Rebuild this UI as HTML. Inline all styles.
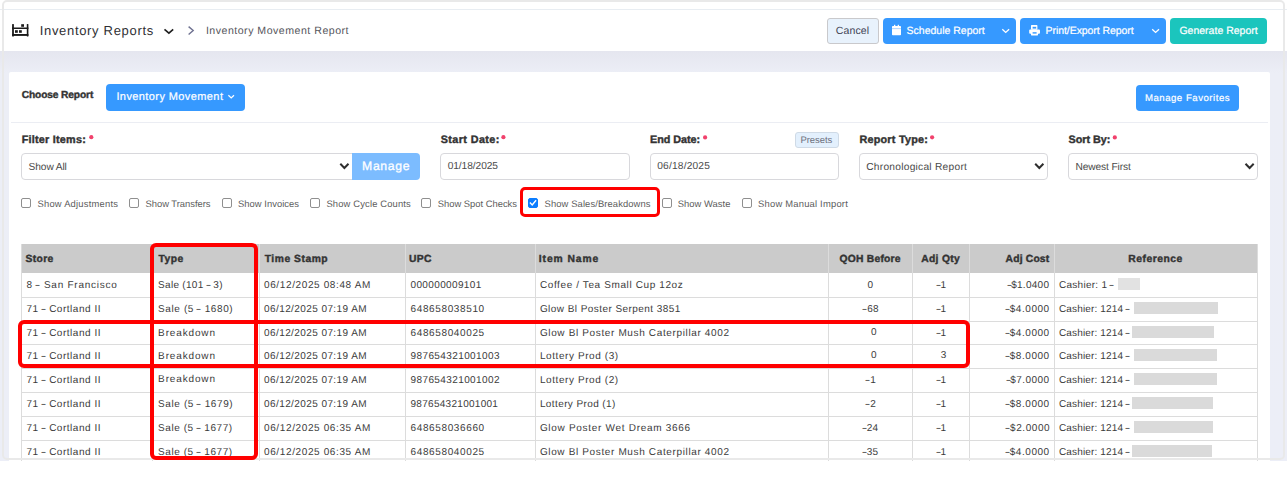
<!DOCTYPE html>
<html><head><meta charset="utf-8">
<style>
html,body{margin:0;padding:0}
body{width:1287px;height:481px;position:relative;overflow:hidden;background:#fff;font-family:"Liberation Sans",sans-serif}
.a{position:absolute;box-sizing:border-box}
.t{position:absolute;white-space:pre;line-height:1;font-family:"Liberation Sans",sans-serif;text-rendering:geometricPrecision}
.btn{position:absolute;box-sizing:border-box;background:#3699ff;border-radius:4px}
.inp{position:absolute;box-sizing:border-box;background:#fff;border:1px solid #d8d8dc;border-radius:4px}
.cb{position:absolute;box-sizing:border-box;width:10px;height:10px;border:1px solid #8f8f8f;border-radius:2px;background:#fff}
.hl{position:absolute;left:21.5px;width:1236px;height:1px;background:#dcdcdc}
.vl{position:absolute;top:244px;width:1px;height:217px;background:#dcdcdc}
.d{display:inline-block;transform:scaleX(1.65)}
.red{position:absolute;box-sizing:border-box;border:4px solid #ff0000;border-radius:6px}
</style></head><body>
<!-- lavender page bg -->
<div class="a" style="left:0;top:51px;width:1287px;height:410px;background:linear-gradient(#e5e6ef 0px,#eceef6 22px,#eceef7 100%)"></div>
<!-- header line -->
<div class="a" style="left:0;top:9px;width:1287px;height:1px;background:#e8edf2"></div>
<!-- card -->
<div class="a" style="left:9px;top:72px;width:1261px;height:389px;background:#fff;border-radius:2px 2px 0 0"></div>

<!-- header icon -->
<svg class="a" style="left:0;top:0" width="40" height="45" viewBox="0 0 40 45">
 <g fill="#1a1a1a">
  <rect x="12.1" y="24" width="1.8" height="12.6" rx="0.5"/>
  <rect x="26.8" y="24" width="1.6" height="12.6" rx="0.5"/>
  <rect x="12.1" y="27.5" width="16.3" height="1.5"/>
  <rect x="12.1" y="34" width="16.3" height="1.9"/>
  <rect x="21.2" y="24.2" width="2.8" height="2.6"/>
  <rect x="15" y="30.2" width="2.8" height="2.6"/>
  <rect x="19" y="30.2" width="2.8" height="2.6"/>
 </g>
</svg>
<svg class="a" style="left:150px;top:15px" width="60" height="30" viewBox="150 15 60 30">
 <polyline points="164.5,29.4 168.9,33.2 173.2,29.4" fill="none" stroke="#1e1e1e" stroke-width="1.6"/>
 <polyline points="188.6,26.6 193.2,30.5 188.6,34.5" fill="none" stroke="#6f7291" stroke-width="1.4"/>
</svg>

<!-- header buttons -->
<div class="a" style="left:827px;top:18px;width:52px;height:26px;background:#e8f2fc;border:1px solid #c9c9cc;border-radius:3px"></div>
<div class="btn" style="left:883px;top:18px;width:133px;height:26px"></div>
<div class="btn" style="left:1020px;top:18px;width:146px;height:26px"></div>
<div class="btn" style="left:1170px;top:18px;width:97px;height:26px;background:#1bc5bd"></div>
<svg class="a" style="left:880px;top:15px" width="300" height="30" viewBox="880 15 300 30">
 <g fill="#fff">
  <rect x="892" y="26" width="9" height="9.2" rx="0.8"/>
  <rect x="894" y="24.8" width="1.3" height="2"/>
  <rect x="897.7" y="24.8" width="1.3" height="2"/>
 </g>
 <rect x="892" y="28.3" width="9" height="0.8" fill="#9ccbff"/>
 <polyline points="1002.3,29.2 1005.7,32.4 1009.1,29.2" fill="none" stroke="#fff" stroke-width="1.3"/>
 <polyline points="1152.2,29.2 1155.6,32.4 1159,29.2" fill="none" stroke="#fff" stroke-width="1.3"/>
 <g fill="#fff">
  <rect x="1031" y="25.1" width="6.4" height="4.6" rx="0.6"/>
  <rect x="1029.2" y="29.4" width="10.8" height="4.3" rx="1"/>
  <rect x="1031" y="31.6" width="7" height="3.8" rx="0.6"/>
 </g>
 <rect x="1032.6" y="26.8" width="3.6" height="1.8" fill="#3699ff"/>
 <rect x="1032.6" y="32.2" width="4" height="1.4" fill="#3699ff"/>
</svg>

<!-- choose report row -->
<div class="btn" style="left:106px;top:84px;width:139px;height:26.5px"></div>
<svg class="a" style="left:220px;top:88px" width="20" height="16" viewBox="220 88 20 16">
 <polyline points="228.4,95.3 231.2,98 234,95.3" fill="none" stroke="#fff" stroke-width="1.2"/>
</svg>
<div class="btn" style="left:1136px;top:85px;width:103px;height:26px"></div>
<div class="a" style="left:11px;top:122px;width:1257px;height:1px;background:#ebedf3"></div>

<!-- filter row -->
<div class="inp" style="left:21px;top:153px;width:334px;height:27px;border-radius:4px 0 0 4px"></div>
<div class="a" style="left:352px;top:153px;width:68px;height:27px;background:#7cbcff;border-radius:0 4px 4px 0"></div>
<div class="inp" style="left:440px;top:153px;width:190px;height:27px"></div>
<div class="inp" style="left:650px;top:153px;width:189px;height:27px"></div>
<div class="a" style="left:794.5px;top:131.5px;width:44.5px;height:16px;background:#e3f0fd;border:1px solid #cfdae6;border-radius:3px"></div>
<div class="inp" style="left:859px;top:153px;width:189px;height:27px"></div>
<div class="inp" style="left:1068px;top:153px;width:190px;height:27px"></div>
<svg class="a" style="left:330px;top:150px" width="940" height="30" viewBox="330 150 940 30">
 <g fill="none" stroke="#2e2e2e" stroke-width="2">
  <polyline points="340.3,163.8 344.4,168 348.5,163.8"/>
  <polyline points="1035.2,163.8 1039.3,168 1043.4,163.8"/>
  <polyline points="1245.5,163.8 1249.6,168 1253.7,163.8"/>
 </g>
</svg>
<!-- asterisks -->
<svg class="a" style="left:0;top:130px" width="1287" height="12" viewBox="0 130 1287 12">
 <g fill="#f1416c">
  <circle cx="91.3" cy="137.2" r="2.1"/>
  <circle cx="503.4" cy="137.2" r="2.1"/>
  <circle cx="705.1" cy="137.4" r="2.1"/>
  <circle cx="932.1" cy="137.3" r="2.1"/>
  <circle cx="1114.8" cy="137.4" r="2.1"/>
 </g>
</svg>

<!-- checkboxes -->
<div class="cb" style="left:21px;top:198px"></div>
<div class="cb" style="left:129px;top:198px"></div>
<div class="cb" style="left:222px;top:198px"></div>
<div class="cb" style="left:310px;top:198px"></div>
<div class="cb" style="left:421px;top:198px"></div>
<div class="cb" style="left:528px;top:198px;background:#0b7dff;border-color:#0b7dff"></div>
<svg class="a" style="left:520px;top:190px" width="30" height="25" viewBox="520 190 30 25">
 <polyline points="529.9,202.6 532.2,205 536.1,200.2" fill="none" stroke="#fff" stroke-width="1.4"/>
</svg>
<div class="cb" style="left:662px;top:198px"></div>
<div class="cb" style="left:742px;top:198px"></div>

<!-- table -->
<div class="a" style="left:21.5px;top:244px;width:1236px;height:29px;background:#cbcbcb"></div>
<div class="a" style="left:21.5px;top:273px;width:1236px;height:187px;background:#fff"></div>
<div class="hl" style="top:297px"></div>
<div class="hl" style="top:321px"></div>
<div class="hl" style="top:344px"></div>
<div class="hl" style="top:368px"></div>
<div class="hl" style="top:392px"></div>
<div class="hl" style="top:416px"></div>
<div class="hl" style="top:440px"></div>
<div class="vl" style="left:21px"></div>
<div class="vl" style="left:152px"></div>
<div class="vl" style="left:259px"></div>
<div class="vl" style="left:405px"></div>
<div class="vl" style="left:535px"></div>
<div class="vl" style="left:828px"></div>
<div class="vl" style="left:912px"></div>
<div class="vl" style="left:969px"></div>
<div class="vl" style="left:1054px"></div>
<div class="vl" style="left:1257px"></div>
<!-- redaction rects -->
<div class="a" style="left:1118px;top:278px;width:22px;height:12px;background:#e2e2e2"></div>
<div class="a" style="left:1134px;top:302px;width:84px;height:12px;background:#dadada"></div>
<div class="a" style="left:1132px;top:326px;width:82px;height:12px;background:#dadada"></div>
<div class="a" style="left:1134px;top:349px;width:83px;height:12px;background:#dadada"></div>
<div class="a" style="left:1134px;top:373px;width:83px;height:12px;background:#dadada"></div>
<div class="a" style="left:1132px;top:397px;width:81px;height:12px;background:#dadada"></div>
<div class="a" style="left:1134px;top:421px;width:79px;height:12px;background:#dadada"></div>
<div class="a" style="left:1132px;top:445px;width:80px;height:12px;background:#dadada"></div>

<span class="t" style="left:39.70px;top:24px;font-size:13px;font-weight:400;color:#2f2f33;letter-spacing:0.681px;">Inventory Reports</span>
<span class="t" style="left:205.90px;top:26px;font-size:10.6px;font-weight:400;color:#55555c;letter-spacing:0.496px;">Inventory Movement Report</span>
<span class="t" style="left:835.70px;top:26px;font-size:10.5px;font-weight:400;color:#3f4254;letter-spacing:0.160px;">Cancel</span>
<span class="t" style="left:906.60px;top:26px;font-size:10.5px;font-weight:400;color:#ffffff;letter-spacing:-0.007px;-webkit-text-stroke:0.2px #ffffff;">Schedule Report</span>
<span class="t" style="left:1045.60px;top:26px;font-size:10.5px;font-weight:400;color:#ffffff;letter-spacing:-0.067px;-webkit-text-stroke:0.2px #ffffff;">Print/Export Report</span>
<span class="t" style="left:1179.40px;top:26px;font-size:10.5px;font-weight:400;color:#ffffff;letter-spacing:0.007px;-webkit-text-stroke:0.2px #ffffff;">Generate Report</span>
<span class="t" style="left:21.70px;top:91px;font-size:10.2px;font-weight:700;color:#333333;letter-spacing:-0.117px;-webkit-text-stroke:0.4px #333333;">Choose Report</span>
<span class="t" style="left:116.40px;top:92px;font-size:11px;font-weight:400;color:#ffffff;letter-spacing:0.406px;-webkit-text-stroke:0.2px #ffffff;">Inventory Movement</span>
<span class="t" style="left:1144.90px;top:94px;font-size:9.6px;font-weight:400;color:#ffffff;letter-spacing:0.527px;-webkit-text-stroke:0.2px #ffffff;">Manage Favorites</span>
<span class="t" style="left:21.70px;top:135px;font-size:10.8px;font-weight:700;color:#333333;letter-spacing:0.242px;-webkit-text-stroke:0.4px #333333;">Filter Items:</span>
<span class="t" style="left:440.70px;top:135px;font-size:10.8px;font-weight:700;color:#333333;letter-spacing:0.400px;-webkit-text-stroke:0.4px #333333;">Start Date:</span>
<span class="t" style="left:650.10px;top:135px;font-size:10.8px;font-weight:700;color:#333333;letter-spacing:-0.038px;-webkit-text-stroke:0.4px #333333;">End Date:</span>
<span class="t" style="left:859.40px;top:135px;font-size:10.8px;font-weight:700;color:#333333;letter-spacing:0.245px;-webkit-text-stroke:0.4px #333333;">Report Type:</span>
<span class="t" style="left:1068.50px;top:135px;font-size:10.8px;font-weight:700;color:#333333;letter-spacing:-0.014px;-webkit-text-stroke:0.4px #333333;">Sort By:</span>
<span class="t" style="left:800.40px;top:136px;font-size:9.5px;font-weight:400;color:#6f7280;letter-spacing:-0.050px;">Presets</span>
<span class="t" style="left:28.60px;top:163px;font-size:10.2px;font-weight:400;color:#4a4a4a;letter-spacing:-0.114px;">Show All</span>
<span class="t" style="left:362.10px;top:160px;font-size:12.2px;font-weight:400;color:#ffffff;letter-spacing:0.660px;-webkit-text-stroke:0.3px #ffffff;">Manage</span>
<span class="t" style="left:447.70px;top:162px;font-size:10.2px;font-weight:400;color:#4a4a4a;letter-spacing:-0.078px;">01/18/2025</span>
<span class="t" style="left:657.20px;top:162px;font-size:10.2px;font-weight:400;color:#4a4a4a;letter-spacing:0.189px;">06/18/2025</span>
<span class="t" style="left:866.20px;top:163px;font-size:10.2px;font-weight:400;color:#4a4a4a;letter-spacing:0.263px;">Chronological Report</span>
<span class="t" style="left:1075.40px;top:163px;font-size:10.2px;font-weight:400;color:#4a4a4a;letter-spacing:-0.100px;">Newest First</span>
<span class="t" style="left:37.50px;top:199px;font-size:9.4px;font-weight:400;color:#5c5c5c;letter-spacing:0.220px;">Show Adjustments</span>
<span class="t" style="left:145.50px;top:199px;font-size:9.4px;font-weight:400;color:#5c5c5c;letter-spacing:-0.008px;">Show Transfers</span>
<span class="t" style="left:238.00px;top:199px;font-size:9.4px;font-weight:400;color:#5c5c5c;letter-spacing:0.042px;">Show Invoices</span>
<span class="t" style="left:326.40px;top:199px;font-size:9.4px;font-weight:400;color:#5c5c5c;letter-spacing:0.163px;">Show Cycle Counts</span>
<span class="t" style="left:437.70px;top:199px;font-size:9.4px;font-weight:400;color:#5c5c5c;letter-spacing:0.007px;">Show Spot Checks</span>
<span class="t" style="left:544.60px;top:199px;font-size:9.4px;font-weight:400;color:#5c5c5c;letter-spacing:0.110px;">Show Sales/Breakdowns</span>
<span class="t" style="left:677.80px;top:199px;font-size:9.4px;font-weight:400;color:#5c5c5c;letter-spacing:0.033px;">Show Waste</span>
<span class="t" style="left:758.10px;top:199px;font-size:9.4px;font-weight:400;color:#5c5c5c;letter-spacing:0.218px;">Show Manual Import</span>
<span class="t" style="left:25.50px;top:255px;font-size:10.3px;font-weight:700;color:#333333;letter-spacing:0.375px;-webkit-text-stroke:0.4px #333333;">Store</span>
<span class="t" style="left:158.60px;top:255px;font-size:10.3px;font-weight:700;color:#333333;letter-spacing:0.433px;-webkit-text-stroke:0.4px #333333;">Type</span>
<span class="t" style="left:264.70px;top:255px;font-size:10.3px;font-weight:700;color:#333333;letter-spacing:0.533px;-webkit-text-stroke:0.4px #333333;">Time Stamp</span>
<span class="t" style="left:408.90px;top:255px;font-size:10.3px;font-weight:700;color:#333333;letter-spacing:0.400px;-webkit-text-stroke:0.4px #333333;">UPC</span>
<span class="t" style="left:538.80px;top:255px;font-size:10.3px;font-weight:700;color:#333333;letter-spacing:0.925px;-webkit-text-stroke:0.4px #333333;">Item Name</span>
<span class="t" style="left:839.60px;top:255px;font-size:10.3px;font-weight:700;color:#333333;letter-spacing:0.222px;-webkit-text-stroke:0.4px #333333;">QOH Before</span>
<span class="t" style="left:921.30px;top:255px;font-size:10.3px;font-weight:700;color:#333333;letter-spacing:0.283px;-webkit-text-stroke:0.4px #333333;">Adj Qty</span>
<span class="t" style="left:1005.50px;top:255px;font-size:10.3px;font-weight:700;color:#333333;letter-spacing:0.200px;-webkit-text-stroke:0.4px #333333;">Adj Cost</span>
<span class="t" style="left:1128.30px;top:255px;font-size:10.3px;font-weight:700;color:#333333;letter-spacing:0.513px;-webkit-text-stroke:0.4px #333333;">Reference</span>
<span class="t" style="left:26.50px;top:281px;font-size:10px;font-weight:400;color:#3b3b3b;letter-spacing:0.744px;">8 <span class="d">-</span> San Francisco</span>
<span class="t" style="left:158.10px;top:281px;font-size:10px;font-weight:400;color:#3b3b3b;letter-spacing:0.292px;">Sale (101 <span class="d">-</span> 3)</span>
<span class="t" style="left:264.00px;top:281px;font-size:10px;font-weight:400;color:#3b3b3b;letter-spacing:0.622px;">06/12/2025 08:48 AM</span>
<span class="t" style="left:410.50px;top:281px;font-size:10px;font-weight:400;color:#3b3b3b;letter-spacing:0.364px;">000000009101</span>
<span class="t" style="left:539.90px;top:281px;font-size:10px;font-weight:400;color:#3b3b3b;letter-spacing:0.612px;">Coffee / Tea Small Cup 12oz</span>
<span class="t" style="left:867.40px;top:281px;font-size:10px;font-weight:400;color:#3b3b3b;letter-spacing:0.400px;">0</span>
<span class="t" style="left:936.80px;top:281px;font-size:10px;font-weight:400;color:#3b3b3b;letter-spacing:0.400px;"><span class="d">-</span>1</span>
<span class="t" style="left:1007.50px;top:281px;font-size:10px;font-weight:400;color:#3b3b3b;letter-spacing:0.286px;"><span class="d">-</span>$1.0400</span>
<span class="t" style="left:1059.00px;top:281px;font-size:10px;font-weight:400;color:#3b3b3b;letter-spacing:0.273px;">Cashier: 1 <span class="d">-</span></span>
<span class="t" style="left:26.50px;top:305px;font-size:10px;font-weight:400;color:#3b3b3b;letter-spacing:0.520px;">71 <span class="d">-</span> Cortland II</span>
<span class="t" style="left:158.10px;top:305px;font-size:10px;font-weight:400;color:#3b3b3b;letter-spacing:0.600px;">Sale (5 <span class="d">-</span> 1680)</span>
<span class="t" style="left:264.00px;top:305px;font-size:10px;font-weight:400;color:#3b3b3b;letter-spacing:0.417px;">06/12/2025 07:19 AM</span>
<span class="t" style="left:410.50px;top:305px;font-size:10px;font-weight:400;color:#3b3b3b;letter-spacing:0.627px;">648658038510</span>
<span class="t" style="left:539.90px;top:305px;font-size:10px;font-weight:400;color:#3b3b3b;letter-spacing:0.442px;">Glow Bl Poster Serpent 3851</span>
<span class="t" style="left:863.40px;top:305px;font-size:10px;font-weight:400;color:#3b3b3b;letter-spacing:0.400px;"><span class="d">-</span>68</span>
<span class="t" style="left:936.80px;top:305px;font-size:10px;font-weight:400;color:#3b3b3b;letter-spacing:0.400px;"><span class="d">-</span>1</span>
<span class="t" style="left:1005.90px;top:305px;font-size:10px;font-weight:400;color:#3b3b3b;letter-spacing:0.543px;"><span class="d">-</span>$4.0000</span>
<span class="t" style="left:1059.00px;top:305px;font-size:10px;font-weight:400;color:#3b3b3b;letter-spacing:0.143px;">Cashier: 1214 <span class="d">-</span></span>
<span class="t" style="left:26.50px;top:329px;font-size:10px;font-weight:400;color:#3b3b3b;letter-spacing:0.520px;">71 <span class="d">-</span> Cortland II</span>
<span class="t" style="left:158.10px;top:329px;font-size:10px;font-weight:400;color:#3b3b3b;letter-spacing:0.862px;">Breakdown</span>
<span class="t" style="left:264.00px;top:329px;font-size:10px;font-weight:400;color:#3b3b3b;letter-spacing:0.417px;">06/12/2025 07:19 AM</span>
<span class="t" style="left:410.50px;top:329px;font-size:10px;font-weight:400;color:#3b3b3b;letter-spacing:0.627px;">648658040025</span>
<span class="t" style="left:539.90px;top:329px;font-size:10px;font-weight:400;color:#3b3b3b;letter-spacing:0.640px;">Glow Bl Poster Mush Caterpillar 4002</span>
<span class="t" style="left:870.90px;top:328px;font-size:10px;font-weight:400;color:#3b3b3b;letter-spacing:0.400px;">0</span>
<span class="t" style="left:936.80px;top:329px;font-size:10px;font-weight:400;color:#3b3b3b;letter-spacing:0.400px;"><span class="d">-</span>1</span>
<span class="t" style="left:1005.90px;top:329px;font-size:10px;font-weight:400;color:#3b3b3b;letter-spacing:0.543px;"><span class="d">-</span>$4.0000</span>
<span class="t" style="left:1059.00px;top:329px;font-size:10px;font-weight:400;color:#3b3b3b;letter-spacing:0.143px;">Cashier: 1214 <span class="d">-</span></span>
<span class="t" style="left:26.50px;top:352px;font-size:10px;font-weight:400;color:#3b3b3b;letter-spacing:0.520px;">71 <span class="d">-</span> Cortland II</span>
<span class="t" style="left:158.10px;top:352px;font-size:10px;font-weight:400;color:#3b3b3b;letter-spacing:0.862px;">Breakdown</span>
<span class="t" style="left:264.00px;top:352px;font-size:10px;font-weight:400;color:#3b3b3b;letter-spacing:0.417px;">06/12/2025 07:19 AM</span>
<span class="t" style="left:410.50px;top:352px;font-size:10px;font-weight:400;color:#3b3b3b;letter-spacing:0.400px;">987654321001003</span>
<span class="t" style="left:539.90px;top:352px;font-size:10px;font-weight:400;color:#3b3b3b;letter-spacing:0.587px;">Lottery Prod (3)</span>
<span class="t" style="left:870.90px;top:351px;font-size:10px;font-weight:400;color:#3b3b3b;letter-spacing:0.400px;">0</span>
<span class="t" style="left:940.80px;top:351px;font-size:10px;font-weight:400;color:#3b3b3b;letter-spacing:0.400px;">3</span>
<span class="t" style="left:1005.90px;top:352px;font-size:10px;font-weight:400;color:#3b3b3b;letter-spacing:0.543px;"><span class="d">-</span>$8.0000</span>
<span class="t" style="left:1059.00px;top:352px;font-size:10px;font-weight:400;color:#3b3b3b;letter-spacing:0.143px;">Cashier: 1214 <span class="d">-</span></span>
<span class="t" style="left:26.50px;top:376px;font-size:10px;font-weight:400;color:#3b3b3b;letter-spacing:0.520px;">71 <span class="d">-</span> Cortland II</span>
<span class="t" style="left:158.10px;top:375px;font-size:10px;font-weight:400;color:#3b3b3b;letter-spacing:0.862px;">Breakdown</span>
<span class="t" style="left:264.00px;top:376px;font-size:10px;font-weight:400;color:#3b3b3b;letter-spacing:0.417px;">06/12/2025 07:19 AM</span>
<span class="t" style="left:410.50px;top:376px;font-size:10px;font-weight:400;color:#3b3b3b;letter-spacing:0.400px;">987654321001002</span>
<span class="t" style="left:539.90px;top:376px;font-size:10px;font-weight:400;color:#3b3b3b;letter-spacing:0.587px;">Lottery Prod (2)</span>
<span class="t" style="left:866.40px;top:376px;font-size:10px;font-weight:400;color:#3b3b3b;letter-spacing:0.400px;"><span class="d">-</span>1</span>
<span class="t" style="left:936.80px;top:376px;font-size:10px;font-weight:400;color:#3b3b3b;letter-spacing:0.400px;"><span class="d">-</span>1</span>
<span class="t" style="left:1006.50px;top:376px;font-size:10px;font-weight:400;color:#3b3b3b;letter-spacing:0.429px;"><span class="d">-</span>$7.0000</span>
<span class="t" style="left:1059.00px;top:376px;font-size:10px;font-weight:400;color:#3b3b3b;letter-spacing:0.143px;">Cashier: 1214 <span class="d">-</span></span>
<span class="t" style="left:26.50px;top:400px;font-size:10px;font-weight:400;color:#3b3b3b;letter-spacing:0.520px;">71 <span class="d">-</span> Cortland II</span>
<span class="t" style="left:158.10px;top:400px;font-size:10px;font-weight:400;color:#3b3b3b;letter-spacing:0.600px;">Sale (5 <span class="d">-</span> 1679)</span>
<span class="t" style="left:264.00px;top:400px;font-size:10px;font-weight:400;color:#3b3b3b;letter-spacing:0.417px;">06/12/2025 07:19 AM</span>
<span class="t" style="left:410.50px;top:400px;font-size:10px;font-weight:400;color:#3b3b3b;letter-spacing:0.286px;">987654321001001</span>
<span class="t" style="left:539.90px;top:400px;font-size:10px;font-weight:400;color:#3b3b3b;letter-spacing:0.400px;">Lottery Prod (1)</span>
<span class="t" style="left:866.40px;top:400px;font-size:10px;font-weight:400;color:#3b3b3b;letter-spacing:0.400px;"><span class="d">-</span>2</span>
<span class="t" style="left:936.80px;top:400px;font-size:10px;font-weight:400;color:#3b3b3b;letter-spacing:0.400px;"><span class="d">-</span>1</span>
<span class="t" style="left:1005.90px;top:400px;font-size:10px;font-weight:400;color:#3b3b3b;letter-spacing:0.543px;"><span class="d">-</span>$8.0000</span>
<span class="t" style="left:1059.00px;top:400px;font-size:10px;font-weight:400;color:#3b3b3b;letter-spacing:0.143px;">Cashier: 1214 <span class="d">-</span></span>
<span class="t" style="left:26.50px;top:424px;font-size:10px;font-weight:400;color:#3b3b3b;letter-spacing:0.520px;">71 <span class="d">-</span> Cortland II</span>
<span class="t" style="left:158.10px;top:424px;font-size:10px;font-weight:400;color:#3b3b3b;letter-spacing:0.564px;">Sale (5 <span class="d">-</span> 1677)</span>
<span class="t" style="left:264.00px;top:424px;font-size:10px;font-weight:400;color:#3b3b3b;letter-spacing:0.622px;">06/12/2025 06:35 AM</span>
<span class="t" style="left:410.50px;top:424px;font-size:10px;font-weight:400;color:#3b3b3b;letter-spacing:0.627px;">648658036660</span>
<span class="t" style="left:539.90px;top:424px;font-size:10px;font-weight:400;color:#3b3b3b;letter-spacing:0.704px;">Glow Poster Wet Dream 3666</span>
<span class="t" style="left:862.90px;top:424px;font-size:10px;font-weight:400;color:#3b3b3b;letter-spacing:0.400px;"><span class="d">-</span>24</span>
<span class="t" style="left:936.80px;top:424px;font-size:10px;font-weight:400;color:#3b3b3b;letter-spacing:0.400px;"><span class="d">-</span>1</span>
<span class="t" style="left:1006.20px;top:424px;font-size:10px;font-weight:400;color:#3b3b3b;letter-spacing:0.557px;"><span class="d">-</span>$2.0000</span>
<span class="t" style="left:1059.00px;top:424px;font-size:10px;font-weight:400;color:#3b3b3b;letter-spacing:0.143px;">Cashier: 1214 <span class="d">-</span></span>
<span class="t" style="left:26.50px;top:448px;font-size:10px;font-weight:400;color:#3b3b3b;letter-spacing:0.520px;">71 <span class="d">-</span> Cortland II</span>
<span class="t" style="left:158.10px;top:448px;font-size:10px;font-weight:400;color:#3b3b3b;letter-spacing:0.564px;">Sale (5 <span class="d">-</span> 1677)</span>
<span class="t" style="left:264.00px;top:448px;font-size:10px;font-weight:400;color:#3b3b3b;letter-spacing:0.622px;">06/12/2025 06:35 AM</span>
<span class="t" style="left:410.50px;top:448px;font-size:10px;font-weight:400;color:#3b3b3b;letter-spacing:0.627px;">648658040025</span>
<span class="t" style="left:539.90px;top:448px;font-size:10px;font-weight:400;color:#3b3b3b;letter-spacing:0.640px;">Glow Bl Poster Mush Caterpillar 4002</span>
<span class="t" style="left:862.90px;top:448px;font-size:10px;font-weight:400;color:#3b3b3b;letter-spacing:0.400px;"><span class="d">-</span>35</span>
<span class="t" style="left:936.80px;top:448px;font-size:10px;font-weight:400;color:#3b3b3b;letter-spacing:0.400px;"><span class="d">-</span>1</span>
<span class="t" style="left:1005.90px;top:448px;font-size:10px;font-weight:400;color:#3b3b3b;letter-spacing:0.543px;"><span class="d">-</span>$4.0000</span>
<span class="t" style="left:1059.00px;top:448px;font-size:10px;font-weight:400;color:#3b3b3b;letter-spacing:0.143px;">Cashier: 1214 <span class="d">-</span></span>

<!-- white below -->
<div class="a" style="left:0;top:461px;width:1287px;height:20px;background:#fff"></div>

<!-- frame -->
<div class="a" style="left:2px;top:0;width:1283px;height:460px;border:2px solid #e9e9e9;border-radius:5px"></div>
<!-- red highlight boxes -->
<div class="red" style="left:520px;top:187px;width:139.5px;height:29.5px;border-width:3.8px;border-radius:5px"></div>
<div class="red" style="left:150.3px;top:243px;width:108.2px;height:216.5px"></div>
<div class="red" style="left:17.5px;top:319.7px;width:952px;height:48.3px"></div>

</body></html>
